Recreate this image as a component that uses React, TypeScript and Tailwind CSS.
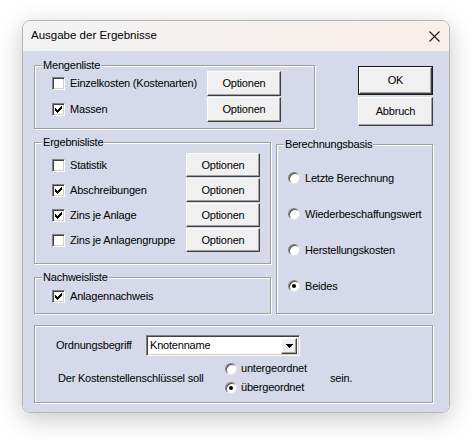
import React from "react";

const font = "font-['Liberation_Sans',Arial,sans-serif] text-[11px] tracking-[-0.2px] text-black";

function Check({ checked }: { checked?: boolean }) {
  return (
    <div className="w-[13px] h-[13px] shrink-0 bg-white border border-t-[#808080] border-l-[#808080] border-r-white border-b-white shadow-[inset_1px_1px_0_#404040,inset_-1px_-1px_0_#d4d0c8] flex items-center justify-center">
      {checked && (
        <svg width="7" height="7" viewBox="0 0 7 7" shapeRendering="crispEdges">
          <rect x="6" y="0" width="1" height="3" fill="#000" />
          <rect x="5" y="1" width="1" height="3" fill="#000" />
          <rect x="4" y="2" width="1" height="3" fill="#000" />
          <rect x="3" y="3" width="1" height="3" fill="#000" />
          <rect x="2" y="4" width="1" height="3" fill="#000" />
          <rect x="1" y="3" width="1" height="3" fill="#000" />
          <rect x="0" y="2" width="1" height="3" fill="#000" />
        </svg>
      )}
    </div>
  );
}

function Radio({ checked }: { checked?: boolean }) {
  return (
    <div className="w-[12px] h-[12px] shrink-0 rounded-full bg-white border border-t-[#808080] border-l-[#808080] border-r-[#e6e6e6] border-b-[#e6e6e6] shadow-[inset_1px_1px_0_#505050] flex items-center justify-center">
      {checked && <div className="w-[4px] h-[4px] rounded-full bg-black" />}
    </div>
  );
}

function Btn({ label, className = "" }: { label: string; className?: string }) {
  return (
    <div
      className={`bg-[#f0f0f0] border border-t-white border-l-white border-r-[#404040] border-b-[#404040] shadow-[inset_-1px_-1px_0_#a0a0a0] flex items-center justify-center ${className}`}
    >
      {label}
    </div>
  );
}

function Group({
  title,
  className = "",
  children,
}: {
  title: string;
  className?: string;
  children?: React.ReactNode;
}) {
  return (
    <div
      className={`relative border border-[#a0a0a0] shadow-[inset_1px_1px_0_#fff,1px_1px_0_#fff] ${className}`}
    >
      {title && (
        <span className="absolute -top-[8px] left-[7px] bg-[#d5d9e9] pl-[1px] pr-[1px] leading-[14px]">
          {title}
        </span>
      )}
      {children}
    </div>
  );
}

function CheckRow({
  label,
  checked,
  button,
  h,
}: {
  label: string;
  checked?: boolean;
  button?: boolean;
  h: string;
}) {
  return (
    <div className={`flex items-center ${h}`}>
      <Check checked={checked} />
      <span className="ml-[5px]">{label}</span>
      {button && <Btn label="Optionen" className="ml-auto w-[74px] h-full" />}
    </div>
  );
}

export default function App() {
  return (
    <div className={`w-[472px] h-[441px] bg-white pt-[20px] pl-[22px] ${font}`}>
      <div className="w-[428px] h-[393px] rounded-[8px] border border-[#b5b5b5] overflow-hidden shadow-[0_6px_24px_rgba(0,0,0,0.22)] flex flex-col">
        <div className="h-[30px] shrink-0 bg-gradient-to-r from-[#f3f3f3] to-[#f8efea] flex items-center justify-between pl-[8px] pr-[9px]">
          <span className="font-['Liberation_Sans',Arial,sans-serif] text-[11.5px] tracking-normal">
            Ausgabe der Ergebnisse
          </span>
          <svg width="11" height="11" viewBox="0 0 11 11">
            <path d="M0.5 0.5 L10.5 10.5 M10.5 0.5 L0.5 10.5" stroke="#1a1a1a" strokeWidth="1.1" />
          </svg>
        </div>
        <div className="flex-1 bg-[#d5d9e9] pt-[14px] pl-[11px] pr-[16px] flex flex-col">
          <div className="flex justify-between items-start">
            <Group title="Mengenliste" className="w-[281px] h-[64px] pt-[5px] pl-[17px] pr-[33px]">
              <div className="flex flex-col gap-[1px]">
                <CheckRow label="Einzelkosten (Kostenarten)" button h="h-[25px]" />
                <CheckRow label="Massen" checked button h="h-[25px]" />
              </div>
            </Group>
            <div className="mt-[1px] flex flex-col gap-[2px]">
              <div className="w-[75px] h-[29px] border border-[#1a1a1a] flex">
                <Btn label="OK" className="flex-1" />
              </div>
              <Btn label="Abbruch" className="w-[75px] h-[29px]" />
            </div>
          </div>

          <div className="mt-[13px] flex justify-between items-start">
            <div className="flex flex-col">
              <Group title="Ergebnisliste" className="w-[237px] h-[122px] pt-[10px] pl-[17px] pr-[10px]">
                <div className="flex flex-col gap-[1px]">
                  <CheckRow label="Statistik" button h="h-[24px]" />
                  <CheckRow label="Abschreibungen" checked button h="h-[24px]" />
                  <CheckRow label="Zins je Anlage" checked button h="h-[24px]" />
                  <CheckRow label="Zins je Anlagengruppe" button h="h-[24px]" />
                </div>
              </Group>
              <Group title="Nachweisliste" className="mt-[13px] w-[237px] h-[37px] pl-[17px] pt-[2px] flex items-center">
                <CheckRow label="Anlagennachweis" checked h="h-[20px]" />
              </Group>
            </div>
            <Group title="Berechnungsbasis" className="mt-[2px] w-[157px] h-[170px] pt-[23px] pl-[11px]">
              <div className="flex flex-col gap-[16px]">
                {[
                  ["Letzte Berechnung", false],
                  ["Wiederbeschaffungswert", false],
                  ["Herstellungskosten", false],
                  ["Beides", true],
                ].map(([l, c]) => (
                  <div key={l as string} className="flex items-center h-[20px]">
                    <Radio checked={c as boolean} />
                    <span className="ml-[5px]">{l as string}</span>
                  </div>
                ))}
              </div>
            </Group>
          </div>

          <Group title="" className="mt-[11px] w-[399px] h-[78px] pt-[9px] pl-[21px]">
            <div className="flex items-center">
              <span className="w-[90px]">Ordnungsbegriff</span>
              <div className="w-[154px] h-[21px] bg-white border border-t-[#808080] border-l-[#808080] border-r-white border-b-white shadow-[inset_1px_1px_0_#404040,inset_-1px_-1px_0_#d4d0c8] flex items-center pl-[3px] pr-[2px]">
                <span className="flex-1">Knotenname</span>
                <div className="w-[16px] h-[16px] bg-[#f0f0f0] border border-t-white border-l-white border-r-[#404040] border-b-[#404040] shadow-[inset_-1px_-1px_0_#a0a0a0] flex items-center justify-center">
                  <svg width="7" height="4" viewBox="0 0 7 4" shapeRendering="crispEdges">
                    <path d="M0 0 H7 L3.5 4 Z" fill="#000" />
                  </svg>
                </div>
              </div>
            </div>
            <div className="mt-[3px] flex items-center">
              <span className="w-[169px] pl-[2px]">Der Kostenstellenschlüssel soll</span>
              <div className="w-[105px] flex flex-col">
                <div className="h-[19px] flex items-center">
                  <Radio />
                  <span className="ml-[4px]">untergeordnet</span>
                </div>
                <div className="h-[19px] flex items-center">
                  <Radio checked />
                  <span className="ml-[4px]">übergeordnet</span>
                </div>
              </div>
              <span>sein.</span>
            </div>
          </Group>
        </div>
      </div>
    </div>
  );
}
